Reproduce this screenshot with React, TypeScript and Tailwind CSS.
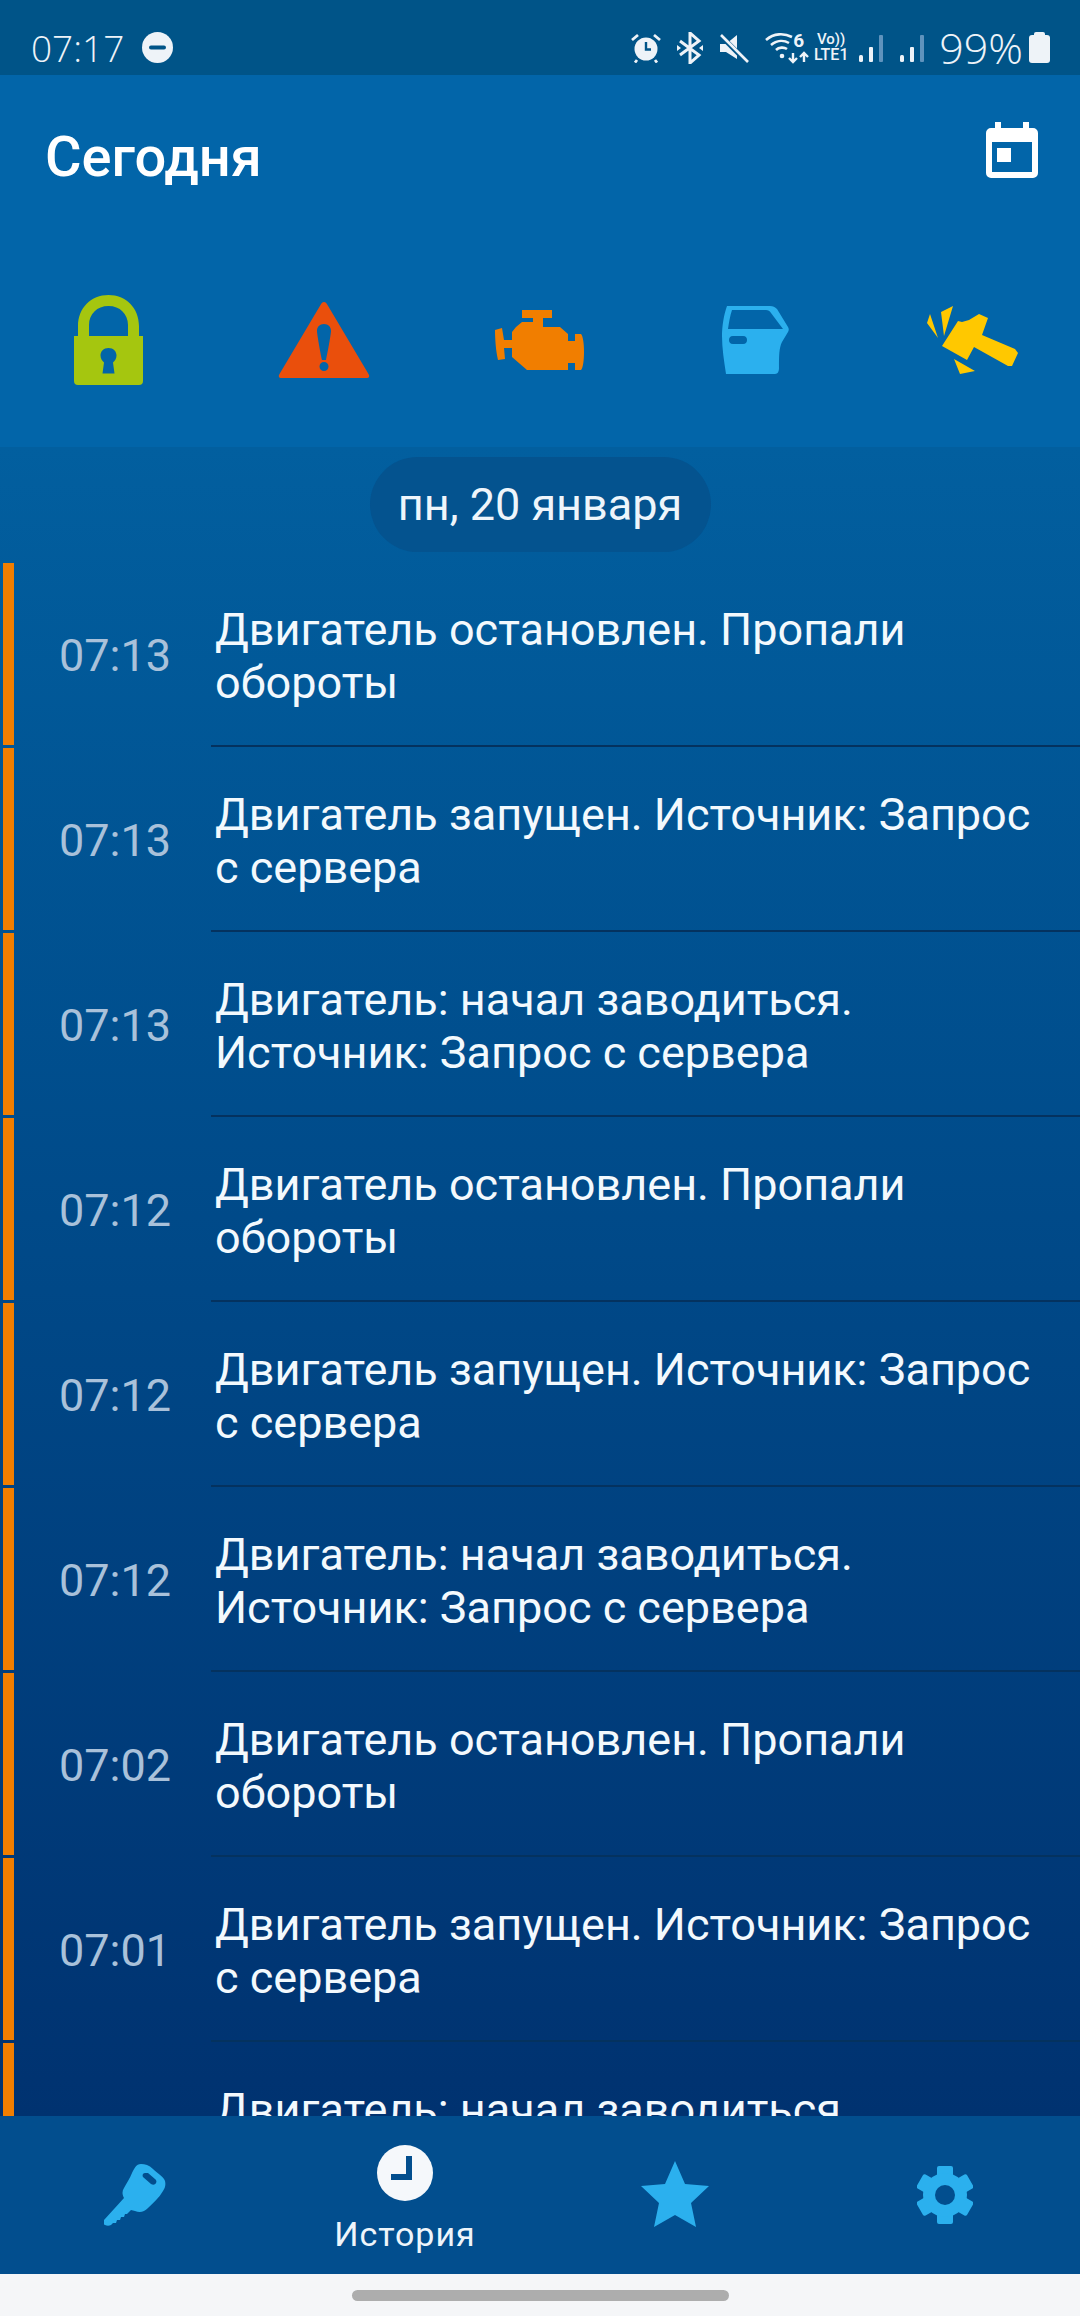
import React from "react";

const rows: [string, string, string][] = [
  ["07:13", "Двигатель остановлен. Пропали", "обороты"],
  ["07:13", "Двигатель запущен. Источник: Запрос", "с сервера"],
  ["07:13", "Двигатель: начал заводиться.", "Источник: Запрос с сервера"],
  ["07:12", "Двигатель остановлен. Пропали", "обороты"],
  ["07:12", "Двигатель запущен. Источник: Запрос", "с сервера"],
  ["07:12", "Двигатель: начал заводиться.", "Источник: Запрос с сервера"],
  ["07:02", "Двигатель остановлен. Пропали", "обороты"],
  ["07:01", "Двигатель запущен. Источник: Запрос", "с сервера"],
  ["07:01", "Двигатель: начал заводиться.", "Источник: Запрос с сервера"],
];

function StatusIcons() {
  const c = "#eef3f8";
  return (
    <div className="flex items-center">
      <svg width="30" height="30" viewBox="0 0 30 30">
        <circle cx="15" cy="16" r="11.500" fill={c} />
        <path d="M15 9v7.500h5" fill="none" stroke="#005488" strokeWidth="2.400" />
        <path d="M1 7l6-5M29 7l-6-5M6 27l-2 2.500M24 27l2 2.500" stroke={c} strokeWidth="2.800" fill="none" />
      </svg>
      <svg width="28" height="32" viewBox="0 0 28 32" className="ml-[15px]">
        <path d="M4 9l19 14-9 8V1l9 8L4 23" fill="none" stroke={c} strokeWidth="3" />
        <path d="M1 13l4 3-4 3zM27 13l-4 3 4 3z" fill={c} />
      </svg>
      <svg width="30" height="30" viewBox="0 0 30 30" className="ml-[15px]">
        <path d="M1 11h6l11-9v24L7 19H1z" fill={c} />
        <path d="M2 3l26 26" stroke="#005488" strokeWidth="5" />
        <path d="M2 2l27 27" stroke={c} strokeWidth="2.600" />
      </svg>
      <div className="relative w-[44px] h-[32px] ml-[16px]">
        <svg width="44" height="32" viewBox="0 0 44 32">
          <path d="M1 8c8-7 18-7 26-3M6 13c6-5 13-5 18-2M11 18c3-3 8-3 11-1" fill="none" stroke={c} strokeWidth="2.600" />
          <circle cx="17" cy="24" r="2.300" fill={c} />
          <path d="M28 21v9M24 26l4 4 4-4M39 30v-9M35 25l4-4 4 4" fill="none" stroke={c} strokeWidth="2.400" />
        </svg>
        <span className="absolute left-[28px] top-[-1px] text-[19px] leading-[20px] font-bold text-[#eef3f8]">6</span>
      </div>
      <div className="flex flex-col items-center ml-[3px] w-[38px] text-[#eef3f8] font-medium">
        <span className="text-[15px] leading-[15px] whitespace-nowrap">Vo))</span>
        <span className="text-[16px] leading-[16px] whitespace-nowrap">LTE1</span>
      </div>
      <svg width="28" height="30" viewBox="0 0 28 30" className="ml-[9px]">
        <rect x="0" y="22" width="4" height="7" rx="1.500" fill={c} />
        <rect x="10" y="14" width="4" height="15" rx="1" fill={c} />
        <rect x="20" y="2" width="4" height="27" rx="1" fill="#5f93bd" />
      </svg>
      <svg width="28" height="30" viewBox="0 0 28 30" className="ml-[13px]">
        <rect x="0" y="22" width="4" height="7" rx="1.500" fill={c} />
        <rect x="10" y="14" width="4" height="15" rx="1" fill={c} />
        <rect x="20" y="2" width="4" height="27" rx="1" fill="#5f93bd" />
      </svg>
      <span className="ml-[11px] text-[43px] leading-none text-[#eef3f8] font-['Open_Sans',sans-serif] font-light">99%</span>
      <div className="ml-[6px] flex flex-col items-center">
        <div className="w-[11px] h-[3px] bg-[#eef3f8] rounded-t-[2px]" />
        <div className="w-[21px] h-[28px] bg-[#eef3f8] rounded-[3px]" />
      </div>
    </div>
  );
}

function Lock() {
  return (
    <svg width="69" height="90" viewBox="0 0 69 90">
      <path fill="#a5c60f" d="M4 41V31C4 13 17 0 34.500 0S65 13 65 31v10h-11V30c0-11-8-19-19.500-19S15 19 15 30v11z" />
      <path fillRule="evenodd" fill="#a5c60f" d="M0 41h69v45a4 4 0 0 1-4 4H4a4 4 0 0 1-4-4zM34.500 53c-5 0-8 3.500-8 7.500 0 3 1.500 5 3.500 7l-1.500 11h12L39 67.500c2-2 3.500-4 3.500-7 0-4-3-7.500-8-7.500z" />
    </svg>
  );
}

function Warn() {
  return (
    <svg width="92" height="76" viewBox="0 0 92 76">
      <path fillRule="evenodd" fill="#ea4f0c" d="M46 0c1.500 0 2.500 1 3.500 3l41 69c1.500 2.500.5 4-2 4H3.500c-2.500 0-3.500-1.500-2-4l41-69c1-2 2-3 3.500-3zM46 22c-4.500 0-7 3-7 7 0 3 3 20 5 29h4c2-9 5-26 5-29 0-4-2.500-7-7-7zM46 60a4.500 4.500 0 1 0 0 9 4.500 4.500 0 0 0 0-9z" />
    </svg>
  );
}

function Engine() {
  return (
    <svg width="90" height="60" viewBox="0 0 90 60">
      <path fill="#f17e00" d="M27 0h30v8H48v9h17l8 7v7h7v-7h6c2 2 3 10 3 18s-1 16-3 18h-6v-7h-7v7H32L17 47V38H9l1 11-7 1c-2-8-3-20-3-30l7-2 2 12h8v-8l4-5 6-5h11V8H27z" />
    </svg>
  );
}

function Door() {
  return (
    <svg width="68" height="68" viewBox="0 0 68 68">
      <path fillRule="evenodd" fill="#2bb0ee" d="M5 0h43c3 0 5 1 7 3l11 18c1 2 1 3 0 5l-6 10c-3 6-3 14-3 26 0 3-1 6-4 6H4C2 55 0 42 0 30 0 20 2 8 5 0zM10 4C8 10 7 16 6 23h55L49 7c-1-2-3-3-5-3zM11 30c-3 0-4 2-4 4s1 4 4 4h10c3 0 4-2 4-4s-1-4-4-4z" />
    </svg>
  );
}

function Hammer() {
  return (
    <svg width="91" height="68" viewBox="0 0 91 68">
      <path fill="#ffc800" d="M15 40L31 15l4 1 7-2 10-6 9 4-6 17 33 14 3 4-6 13h-4L47 41l-7 13z" />
      <path fill="#ffc800" d="M0 17l3-9 8 24zM14 6L26 0l-9 30zM27 53l21 12-15 3z" />
    </svg>
  );
}

function Key() {
  return (
    <svg width="62" height="62" viewBox="0 0 62 62">
      <path fillRule="evenodd" fill="#2bb0ee" d="M37 0c4 0 8 1 12 5s11 8 12 12c1 4 0 7-2 10-4 7-10 12-15 17-4 4-8 5-13 3l-4-1-4 4-2 0-1 3-3 0-1 3-3 0-1 3-3 0-2 2c-2 1-4 1-6 0-2-1-2-3-1-5l20-22c-2-4-2-7 0-10 2-4 6-10 8-15 2-4 4-9 9-9zM41 9c-2 0-3 2-2 4l8 7c2 1 4 1 5-1s0-3-1-4l-7-6z" />
    </svg>
  );
}

function Gear() {
  return (
    <svg width="56" height="58" viewBox="0 0 56 58">
      <g fill="#2bb0ee" transform="translate(28 29)">
        <rect x="-8" y="-29" width="16" height="58" rx="2" />
        <rect x="-8" y="-29" width="16" height="58" rx="2" transform="rotate(60)" />
        <rect x="-8" y="-29" width="16" height="58" rx="2" transform="rotate(120)" />
        <circle r="22" />
      </g>
      <circle cx="28" cy="29" r="10" fill="#024e8e" />
    </svg>
  );
}

export default function App() {
  return (
    <div className="w-[1080px] h-[2316px] flex flex-col overflow-hidden bg-[#f5f6f8] font-['Roboto',sans-serif] text-white">
      <div className="h-[75px] shrink-0 bg-[#005488] flex items-center justify-between pl-[31px] pr-[30px] pt-[20px]">
        <div className="flex items-center">
          <span className="text-[37px] leading-none font-light text-[#eef3f8] font-['Open_Sans',sans-serif]">07:17</span>
          <svg width="31" height="31" viewBox="0 0 31 31" className="ml-[18px]">
            <circle cx="15.500" cy="15.500" r="15.500" fill="#eef3f8" />
            <rect x="7" y="13.500" width="17" height="4" rx="2" fill="#005488" />
          </svg>
        </div>
        <StatusIcons />
      </div>

      <div className="h-[372px] shrink-0 bg-[#0265a9] flex flex-col">
        <div className="flex items-start justify-between h-[220px] pl-[45px] pr-[42px]">
          <h1 className="mt-[52px] text-[56px] leading-[60px] font-medium">Сегодня</h1>
          <svg width="52" height="56" viewBox="0 0 52 56" className="mt-[47px]">
            <path fillRule="evenodd" fill="#ffffff" d="M9 0h6v6h22V0h6v6h4a5 5 0 0 1 5 5v40a5 5 0 0 1-5 5H5a5 5 0 0 1-5-5V11a5 5 0 0 1 5-5h4zM6 20v30h40V20z" />
            <rect x="11" y="26" width="14" height="14" fill="#ffffff" />
          </svg>
        </div>
        <div className="grid grid-cols-5 h-[90px]">
          <div className="flex justify-center items-start"><Lock /></div>
          <div className="flex justify-center items-start pt-[7px]"><Warn /></div>
          <div className="flex justify-center items-start pt-[15px]"><Engine /></div>
          <div className="flex justify-center items-start pt-[11px]"><Door /></div>
          <div className="flex justify-center items-start pt-[11px]"><Hammer /></div>
        </div>
      </div>

      <div className="flex-1 min-h-0 overflow-hidden bg-gradient-to-b from-[#025f9f] to-[#003270]">
        <div className="flex justify-center pt-[10px] pb-[11px]">
          <div className="h-[95px] w-[341px] rounded-full bg-[#04538f] flex items-center justify-center text-[45px] text-[#eef5fb]">
            пн, 20 января
          </div>
        </div>
        {rows.map((r, i) => (
          <div key={i} className="flex h-[185px]">
            <div className="ml-[3px] w-[11px] h-[182px] bg-[#f17e00] shrink-0" />
            <div className="w-[197px] shrink-0 pl-[45px] h-[186px] flex items-center text-[45px] text-[#a9c1da]">{r[0]}</div>
            <div className="flex-1 h-[184px] border-b-2 border-[#04325f] pl-[4px] pt-[3px] flex flex-col justify-center text-[45px] leading-[53px] whitespace-nowrap text-[#f3f9fd]">
              <span>{r[1]}</span>
              <span>{r[2]}</span>
            </div>
          </div>
        ))}
      </div>

      <div className="h-[158px] shrink-0 bg-[#024e8e] grid grid-cols-4">
        <div className="flex justify-center pt-[48px]"><Key /></div>
        <div className="flex flex-col items-center pt-[29px]">
          <svg width="56" height="56" viewBox="0 0 56 56">
            <circle cx="28" cy="28" r="28" fill="#f5f8fb" />
            <path d="M32 11v21H14" fill="none" stroke="#024e8e" strokeWidth="6" />
          </svg>
          <span className="mt-[13px] text-[34px] leading-[40px] tracking-[1px] text-[#eef5fb]">История</span>
        </div>
        <div className="flex justify-center pt-[45px]">
          <svg width="68" height="66" viewBox="0 0 68 66">
            <path fill="#2bb0ee" d="M34 0l10 23 24 2-18 17 5 24-21-12-21 12 5-24L0 25l24-2z" />
          </svg>
        </div>
        <div className="flex justify-center pt-[50px]"><Gear /></div>
      </div>

      <div className="h-[42px] shrink-0 bg-[#f5f6f8] flex justify-center pt-[16px]">
        <div className="w-[377px] h-[11px] rounded-full bg-[#adadad]" />
      </div>
    </div>
  );
}
